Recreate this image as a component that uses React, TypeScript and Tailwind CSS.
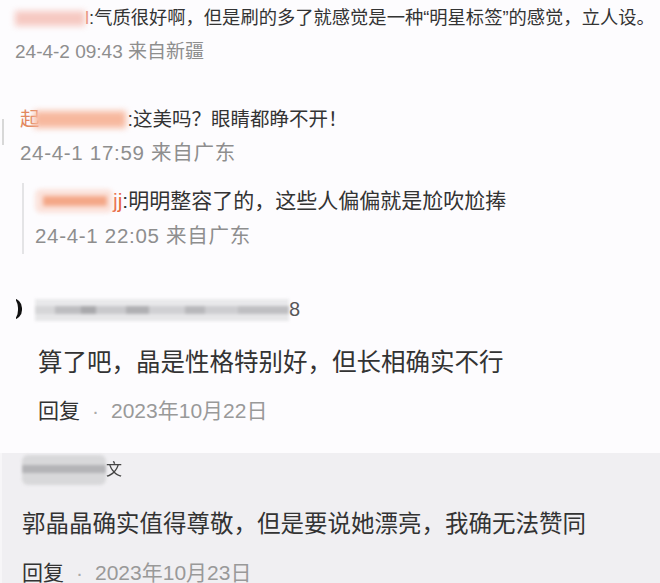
import React from 'react';

const font = { fontFamily: '"Liberation Sans", "Noto Sans CJK SC", sans-serif' };

function Blur({ className }: { className: string }) {
  return <span className={`inline-block align-middle blur-[3px] ${className}`} />;
}

function GrayName({ w }: { w: string }) {
  // pixelated gray name, blurred
  return (
    <span className={`inline-flex h-[22px] ${w} flex-col overflow-hidden align-middle blur-[1.5px]`}>
      <span className="flex h-[7px] w-full bg-[#e9e9eb]" />
      <span className="flex h-[8px] w-full">
        <span className="w-[8%] bg-[#d6d6d8]" />
        <span className="w-[10%] bg-[#bdbdc0]" />
        <span className="w-[6%] bg-[#a9a9ac]" />
        <span className="w-[12%] bg-[#c9c9cc]" />
        <span className="w-[9%] bg-[#b0b0b3]" />
        <span className="w-[14%] bg-[#d0d0d3]" />
        <span className="w-[8%] bg-[#b8b8bb]" />
        <span className="w-[13%] bg-[#cdcdd0]" />
        <span className="w-[20%] bg-[#bfbfc2]" />
      </span>
      <span className="flex h-[7px] w-full bg-[#e6e6e8]" />
    </span>
  );
}

function ReplyLine({ date }: { date: string }) {
  return (
    <div className="flex items-center text-[21px] leading-[30px] whitespace-nowrap">
      <span className="text-[#333]">回复</span>
      <span className="mx-[12px] text-[#aaa]">·</span>
      <span className="text-[#999]">{date}</span>
    </div>
  );
}

export default function App() {
  return (
    <div className="h-[583px] w-[660px] overflow-hidden bg-[#fdfcfe] text-[#333]" style={font}>
      {/* first comment */}
      <div className="pl-[15px] pt-[5px]">
        <div className="flex h-[26px] items-center text-[18.3px] leading-[26px] whitespace-nowrap">
          <Blur className="h-[15px] w-[70px] bg-[#f6c9c2]" />
          <span className="text-[#e88a70]">l</span>
          <span>:气质很好啊，但是刷的多了就感觉是一种“明星标签”的感觉，立人设。</span>
        </div>
        <div className="mt-[8px] h-[26px] text-[19px] leading-[26px] text-[#8e8e8e]">
          24-4-2 09:43 来自新疆
        </div>
      </div>

      {/* second comment */}
      <div className="relative mt-[40px] pl-[20px]">
        <div className="absolute left-[2px] top-[14px] h-[26px] w-[2px] bg-[#d8d8d8] blur-[0.5px]" />
        <div className="flex h-[28px] items-center text-[19.5px] leading-[28px] whitespace-nowrap">
          <span className="text-[#e2885f]">起</span>
          <Blur className="-ml-[6px] h-[17px] w-[92px] bg-[#f7b89e]" />
          <span className="ml-[2px]">:这美吗？眼睛都睁不开！</span>
        </div>
        <div className="mt-[6px] h-[28px] text-[20.5px] leading-[28px] tracking-[0.7px] text-[#8e8e8e]">
          24-4-1 17:59 来自广东
        </div>

        {/* nested reply */}
        <div className="mt-[16px] ml-[2px] border-l-2 border-[#e4e4e6] pl-[11px] pt-[4px] pb-[4px]">
          <div className="flex h-[28px] items-center text-[21px] leading-[28px] whitespace-nowrap">
            <span className="inline-flex h-[24px] w-[78px] items-center rounded-[6px] bg-[#fbe3dc] blur-[2px]">
              <span className="ml-[8px] h-[10px] w-[64px] bg-[#f4a787]" />
            </span>
            <span className="text-[#e8683e]">jj</span>
            <span>:明明整容了的，这些人偏偏就是尬吹尬捧</span>
          </div>
          <div className="mt-[7px] h-[28px] text-[20.5px] leading-[28px] tracking-[0.7px] text-[#8e8e8e]">
            24-4-1 22:05 来自广东
          </div>
        </div>
      </div>

      {/* third comment */}
      <div className="mt-[40px] pl-[16px]">
        <div className="flex h-[30px] items-center">
          <span className="h-[22px] w-[10px] overflow-hidden">
            <span className="-ml-[14px] block h-[22px] w-[20px] rounded-full border-r-[4px] border-[#111] blur-[0.6px]" />
          </span>
          <span className="ml-[9px]">
            <GrayName w="w-[254px]" />
          </span>
          <span className="text-[20px] text-[#555]">8</span>
        </div>
        <div className="mt-[22px] pl-[22px] text-[24.5px] leading-[34px] whitespace-nowrap">
          算了吧，晶是性格特别好，但长相确实不行
        </div>
        <div className="mt-[16px] pl-[22px]">
          <ReplyLine date="2023年10月22日" />
        </div>
      </div>

      {/* fourth comment */}
      <div className="mt-[27px] h-[200px] border-l-2 border-[#f7f6f8] bg-[#f0eff2] pl-[20px] pt-[1px]">
        <div className="flex h-[32px] items-center">
          <span className="inline-block h-[30px] w-[84px] rounded-[6px] bg-[#d8d8da] blur-[1.5px]">
            <span className="mt-[10px] block h-[8px] w-full bg-[#b4b4b7]" />
          </span>
          <span className="text-[16px] text-[#444] blur-[0.5px]">文</span>
        </div>
        <div className="mt-[21px] text-[23.5px] leading-[34px] whitespace-nowrap">
          郭晶晶确实值得尊敬，但是要说她漂亮，我确无法赞同
        </div>
        <div className="mt-[17px]">
          <ReplyLine date="2023年10月23日" />
        </div>
      </div>
    </div>
  );
}
